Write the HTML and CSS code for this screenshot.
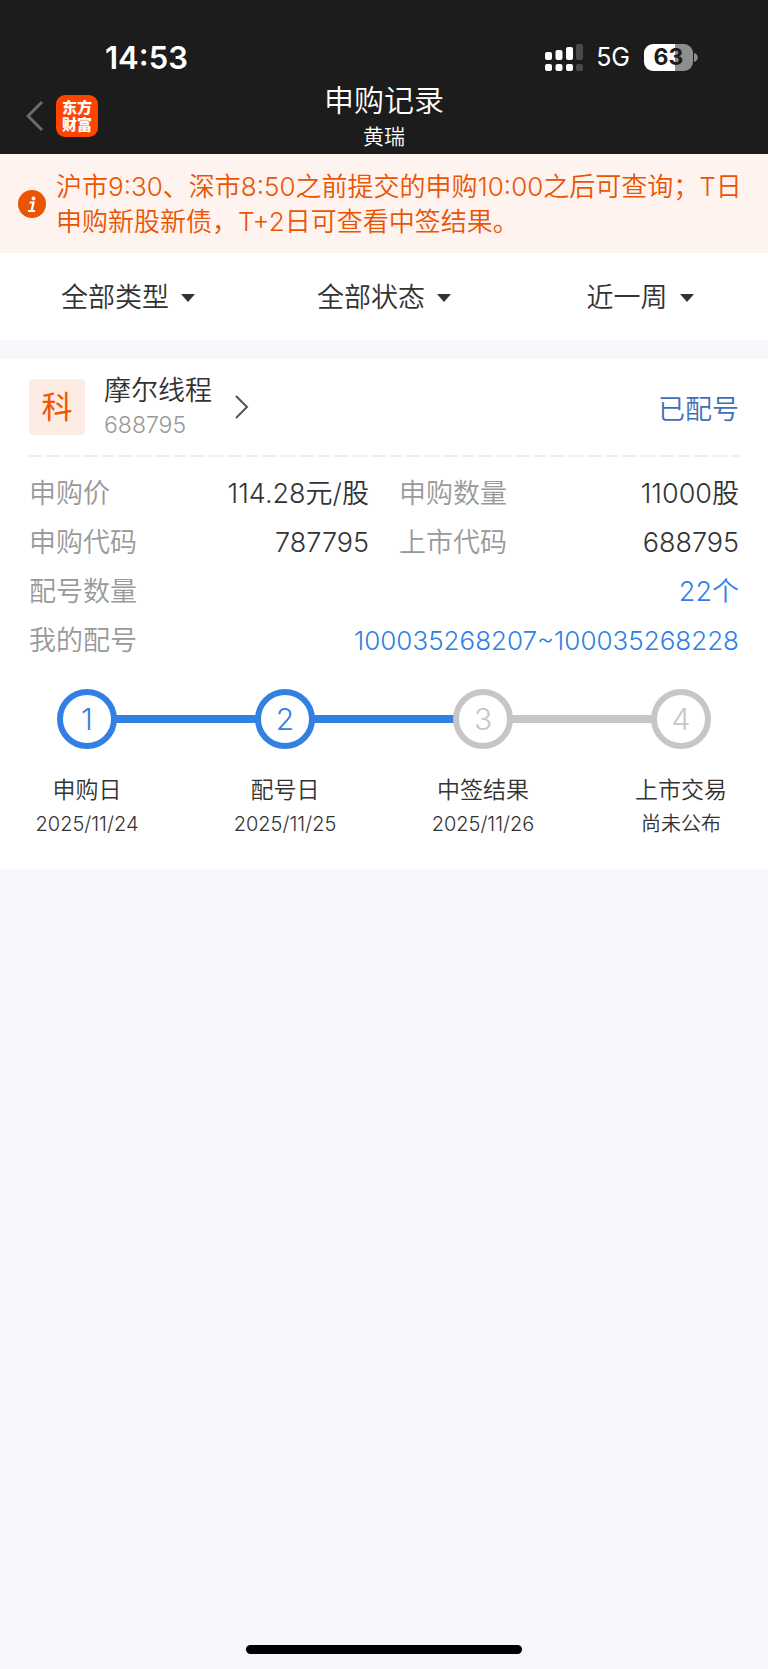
FILE: index.html
```html
<!DOCTYPE html>
<html lang="zh-CN">
<head>
<meta charset="utf-8">
<meta name="viewport" content="width=device-width, initial-scale=1">
<title>申购记录</title>
<link rel="stylesheet" href="styles.css">
</head>
<body>
<header class="header">
  <div class="status">
    <time class="clock">14:53</time>
    <div class="indicators">
      <svg class="signal" width="38" height="27" viewBox="0 0 38 27" aria-hidden="true">
        <g fill="#fff">
          <rect x="0" y="8" width="7" height="8" rx="2"/><rect x="0" y="20" width="7" height="7" rx="2"/>
          <rect x="10.500" y="6" width="7" height="10" rx="2"/><rect x="10.500" y="20" width="7" height="7" rx="2"/>
          <rect x="21" y="3" width="7" height="13" rx="2"/><rect x="21" y="20" width="7" height="7" rx="2"/>
        </g>
        <g fill="#4a4a4a">
          <rect x="31" y="0" width="7" height="16" rx="2"/><rect x="31" y="20" width="7" height="7" rx="2"/>
        </g>
      </svg>
      <span class="network">5G</span>
      <span class="battery"><span class="battery-level">63</span><svg width="5" height="9" viewBox="0 0 5 9" aria-hidden="true"><path d="M1 0C6 1 6 8 1 9Z" fill="#8e8e8e"/></svg></span>
    </div>
  </div>
  <div class="nav">
    <div class="nav-left">
      <button class="back" type="button" aria-label="返回">
        <svg width="18" height="32" viewBox="0 0 18 32" aria-hidden="true"><path d="M16 2 2 16 16 30" fill="none" stroke="#6b6b6b" stroke-width="3"/></svg>
      </button>
      <div class="logo"><span>东方</span><span>财富</span></div>
    </div>
    <div class="heading">
      <h1 class="title">申购记录</h1>
      <p class="user">黄瑞</p>
    </div>
  </div>
</header>
<main>
  <div class="notice">
    <svg class="notice-icon" width="28" height="28" viewBox="0 0 28 28" aria-hidden="true">
      <circle cx="14" cy="14" r="14" fill="#ea5504"/>
      <circle cx="15.500" cy="8.500" r="2" fill="#fff"/>
      <path d="M11.500 12.500H15.500L13.500 21M10 21H17" fill="none" stroke="#fff" stroke-width="2.200"/>
    </svg>
    <p class="notice-text">沪市9:30、深市8:50之前提交的申购10:00之后可查询；T日申购新股新债，T+2日可查看中签结果。</p>
  </div>
  <div class="filters">
    <label class="filter"><select class="filter-select" aria-label="类型"><option>全部类型</option></select><svg width="14" height="8" viewBox="0 0 14 8" aria-hidden="true"><path d="M0 0H14L7 8Z" fill="#333"/></svg></label>
    <label class="filter"><select class="filter-select" aria-label="状态"><option>全部状态</option></select><svg width="14" height="8" viewBox="0 0 14 8" aria-hidden="true"><path d="M0 0H14L7 8Z" fill="#333"/></svg></label>
    <label class="filter"><select class="filter-select" aria-label="时间"><option>近一周</option></select><svg width="14" height="8" viewBox="0 0 14 8" aria-hidden="true"><path d="M0 0H14L7 8Z" fill="#333"/></svg></label>
  </div>
  <section class="card">
    <div class="card-head">
      <a class="stock" href="#">
        <span class="tag">科</span>
        <span class="stock-text"><span class="stock-name">摩尔线程</span><span class="stock-code">688795</span></span>
        <svg width="14" height="24" viewBox="0 0 14 24" aria-hidden="true"><path d="M1 1 12 12 1 23" fill="none" stroke="#555" stroke-width="2"/></svg>
      </a>
      <span class="state">已配号</span>
    </div>
    <dl class="details">
      <div class="row"><dt>申购价</dt><dd>114.28元/股</dd></div>
      <div class="row"><dt>申购数量</dt><dd>11000股</dd></div>
      <div class="row"><dt>申购代码</dt><dd>787795</dd></div>
      <div class="row"><dt>上市代码</dt><dd>688795</dd></div>
      <div class="row row-wide"><dt>配号数量</dt><dd><a class="link" href="#">22个</a></dd></div>
      <div class="row row-wide"><dt>我的配号</dt><dd><a class="link link-range" href="#">100035268207~100035268228</a></dd></div>
    </dl>
    <div class="track">
      <span class="dot dot-done">1</span><span class="line line-done"></span>
      <span class="dot dot-done">2</span><span class="line line-done"></span>
      <span class="dot">3</span><span class="line"></span>
      <span class="dot">4</span>
    </div>
    <ol class="steps">
      <li class="step"><span class="step-name">申购日</span><span class="step-date">2025/11/24</span></li>
      <li class="step"><span class="step-name">配号日</span><span class="step-date">2025/11/25</span></li>
      <li class="step"><span class="step-name">中签结果</span><span class="step-date">2025/11/26</span></li>
      <li class="step"><span class="step-name">上市交易</span><span class="step-date">尚未公布</span></li>
    </ol>
  </section>
</main>
<div class="home-bar"></div>
</body>
</html>
```
FILE: styles.css
```css
* {
  box-sizing: border-box;
  margin: 0;
  padding: 0;
}

body {
  min-height: 100vh;
  display: flex;
  flex-direction: column;
  background: #f6f7fa;
  color: #333;
  font-family: Inter, "Noto Sans CJK SC", sans-serif;
  font-size: 27px;
  font-weight: 350;
}

a {
  color: inherit;
  text-decoration: none;
}

svg {
  display: block;
  flex: none;
}

.header {
  padding-bottom: 3px;
  background: #1c1c1c;
  color: #fff;
}

.status {
  display: flex;
  justify-content: space-between;
  align-items: center;
  padding: 36px 70px 0 105px;
  height: 78px;
}

.clock {
  font-size: 31px;
  font-weight: 600;
}

.indicators {
  display: flex;
  align-items: center;
}

.network {
  margin: 0 14px 0 13px;
  font-size: 25px;
  font-weight: 400;
}

.battery {
  display: flex;
  align-items: center;
}

.battery-level {
  width: 49px;
  border-radius: 9px;
  background: linear-gradient(to right, #fff 63%, #8e8e8e 63%);
  color: #1c1c1c;
  font-size: 23px;
  font-weight: 700;
  line-height: 27px;
  text-align: center;
}

.nav {
  display: grid;
  grid-template-columns: 1fr auto 1fr;
}

.nav-left {
  display: flex;
  align-items: center;
  gap: 12px;
  padding: 2px 0 0 26px;
}

.back {
  border: 0;
  background: none;
}

.logo {
  display: flex;
  flex-direction: column;
  align-items: center;
  justify-content: center;
  width: 42px;
  height: 42px;
  border-radius: 9px;
  background: #ff4400;
  font-size: 15px;
  font-weight: 900;
  line-height: 17px;
}

.heading {
  text-align: center;
}

.title {
  font-size: 30px;
  font-weight: 350;
  line-height: 44px;
}

.user {
  font-size: 21px;
  line-height: 29px;
}

.notice {
  display: flex;
  align-items: center;
  gap: 10px;
  padding: 15px 18px 14px;
  background: #fff3ef;
  color: #ea5504;
}

.notice-text {
  font-size: 26px;
  line-height: 35px;
}

.filters {
  display: grid;
  grid-template-columns: repeat(3, 1fr);
  background: #fff;
}

.filter {
  display: flex;
  align-items: center;
  justify-content: center;
  gap: 12px;
  height: 87px;
  padding-top: 2px;
}

.filter-select {
  appearance: none;
  border: 0;
  background: none;
  color: inherit;
  font: inherit;
}

.card {
  margin-top: 19px;
  padding: 14px 29px 28px;
  background: #fff;
}

.card-head {
  display: flex;
  align-items: center;
  justify-content: space-between;
  padding-bottom: 16px;
  background: repeating-linear-gradient(to right, #eee 0 14px, transparent 14px 18px) bottom / 100% 2px no-repeat;
}

.stock {
  display: flex;
  align-items: center;
}

.tag {
  width: 56px;
  margin-right: 19px;
  border-radius: 4px;
  background: #fdece4;
  color: #f25500;
  font-size: 31px;
  font-weight: 400;
  line-height: 56px;
  text-align: center;
}

.stock-text {
  display: flex;
  flex-direction: column;
  margin-right: 23px;
}

.stock-name {
  line-height: 36px;
}

.stock-code {
  color: #999;
  font-size: 23px;
  line-height: 32px;
}

.state {
  color: #3f6fb5;
}

.details {
  display: grid;
  grid-template-columns: 1fr 1fr;
  column-gap: 30px;
  padding: 12px 0 24px;
  line-height: 49px;
}

.row {
  display: flex;
  justify-content: space-between;
}

.row-wide {
  grid-column: 1 / -1;
}

dt {
  color: #999;
}

.link {
  color: #2f80e6;
}

.link-range {
  font-size: 26px;
}

.track {
  display: flex;
  align-items: center;
  padding: 0 28px;
}

.dot {
  width: 60px;
  border: 6px solid #c6c6c6;
  border-radius: 50%;
  color: #c6c6c6;
  font-size: 30px;
  font-weight: 300;
  line-height: 48px;
  text-align: center;
}

.dot-done {
  border-color: #3380e3;
  color: #3380e3;
}

.line {
  flex: 1;
  height: 8px;
  margin: 0 -1px;
  background: #c6c6c6;
}

.line-done {
  background: #3380e3;
}

.steps {
  display: flex;
  justify-content: space-between;
  padding-top: 23px;
  list-style: none;
}

.step {
  display: flex;
  flex-direction: column;
  align-items: center;
  width: 116px;
}

.step-name {
  font-size: 23px;
  line-height: 36px;
}

.step-date {
  font-size: 20px;
  line-height: 33px;
}

.home-bar {
  width: 36%;
  height: 9px;
  margin: auto auto 15px;
  border-radius: 5px;
  background: #000;
}
```
